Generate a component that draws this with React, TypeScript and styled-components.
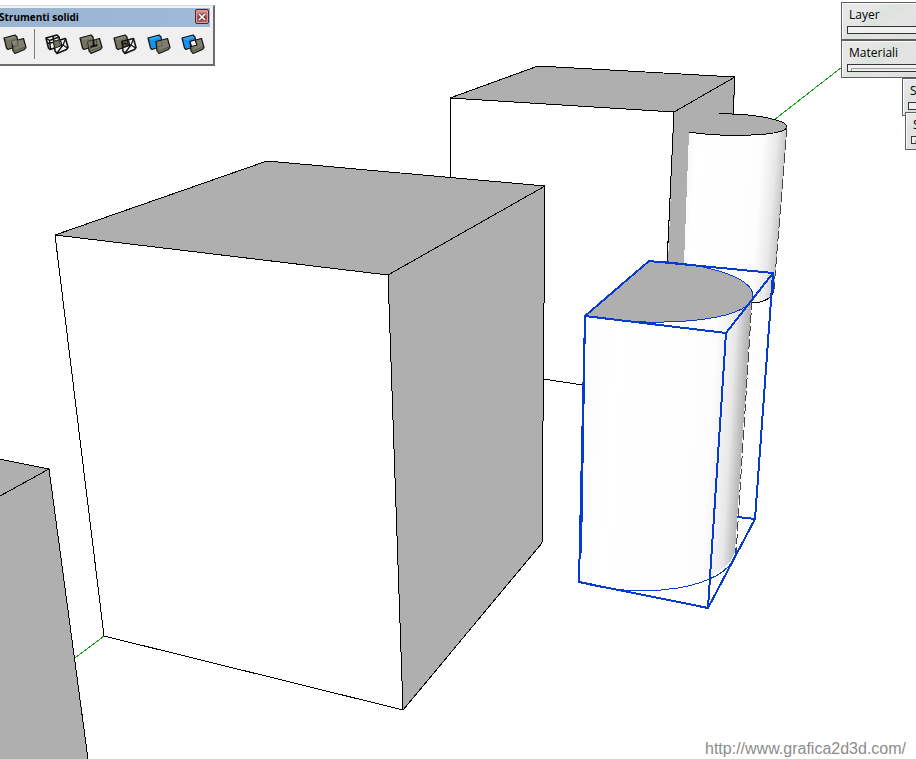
import React from "react";
import styled, { createGlobalStyle } from "styled-components";

const GlobalStyle = createGlobalStyle`
  * { box-sizing: border-box; }
  body {
    margin: 0;
    background: #fff;
    font-family: "Open Sans", "Noto Sans", sans-serif;
    font-size: 12px;
    color: #000;
  }
`;

const Workspace = styled.main`
  position: relative;
  width: 100%;
  height: 100vh;
  overflow: hidden;
  background: #fff;
`;

const Scene = styled.svg`
  display: block;
  width: 100%;
  height: 100%;
  shape-rendering: crispEdges;
`;

const ToolWindow = styled.section`
  position: absolute;
  top: 5px;
  left: -6px;
  padding: 2px 3px 3px;
  background: #f0f0f0;
  border: 1px solid #dcdcdc;
  border-right: 2px solid #6c6c6c;
  border-bottom: 2px solid #6c6c6c;
`;

const TitleBar = styled.header`
  display: flex;
  align-items: center;
  justify-content: space-between;
  height: 19px;
  padding: 0 1px 2px;
  background: linear-gradient(90deg, #99b4d1, #9fb9d8);
`;

const Title = styled.h1`
  margin: 0;
  font: bold 10px/18px "Open Sans", "Noto Sans", sans-serif;
  white-space: nowrap;
`;

const CloseButton = styled.button`
  display: grid;
  place-items: center;
  width: 14px;
  height: 15px;
  padding: 0;
  border: 1px solid #5b2020;
  border-radius: 2px;
  background: linear-gradient(#d99a98, #b95a58 48%, #a8403e 52%, #bd6462);
  box-shadow: inset 0 0 0 1px #d8a09e;
`;

const Tools = styled.div`
  display: flex;
  align-items: center;
  height: 34px;
`;

const ToolButton = styled.button`
  display: grid;
  place-items: center;
  width: 34px;
  height: 30px;
  padding: 0;
  border: 0;
  background: transparent;
`;

const Divider = styled.span`
  width: 1px;
  height: 30px;
  margin: 0 5px 0 2px;
  background: #7c7c7c;
`;

const TrayStack = styled.aside<{ $top: number; $width: number }>`
  position: absolute;
  top: ${(p) => p.$top}px;
  right: 0;
  width: ${(p) => p.$width}px;
`;

const Tray = styled.section`
  height: 38px;
  padding: 4px 0 0 4px;
  overflow: hidden;
  border: 1px solid #5f5f5f;
  border-right: 0;
  box-shadow: inset 1px 1px 0 #fafafa;
  background: linear-gradient(145deg, #e8e8e8 25%, #dce3dc 48%, #e4e4e4 65%, #dedede);
`;

const TrayTitle = styled.h2`
  margin: 0 0 3px 3px;
  font: 12px/16px "Open Sans", "Noto Sans", sans-serif;
`;

const TraySlot = styled.div<{ $inset?: boolean }>`
  height: 8px;
  margin-left: 1px;
  padding: 3px 0 0 3px;
  border: 1px solid #343434;
  border-right: 0;
  background: #f0f0f0;

  &::before {
    content: "";
    display: ${(p) => (p.$inset ? "block" : "none")};
    height: 2px;
    border-top: 1px solid #9c9c9c;
    border-left: 1px solid #9c9c9c;
  }
`;

const SiteLink = styled.a`
  position: absolute;
  right: 10px;
  bottom: 0;
  color: #8c8c8c;
  font: 16px/20px "Liberation Sans", Arial, sans-serif;
  text-decoration: none;
`;

type Kind = "union" | "intersect" | "outerShell" | "subtract" | "trim" | "split";

const OLIVE = "#74735f";
const OLIVE_TOP = "#88877a";
const BLUE = "#1592ed";

const BACK = "M1 4 12 1 14 3 15.5 12 5 15.5 3.5 14Z";
const FRONT = "M9 7.5 20.5 4.5 23 13.5 21.5 15.5 12 19.5 10 17Z";

function ToolIcon({ kind }: { kind: Kind }) {
  const blue = kind === "trim" || kind === "split";
  const wireBack = kind === "intersect";
  const wireFront = kind === "intersect" || kind === "subtract";
  return (
    <svg width="24" height="21" viewBox="0 0 24 21" strokeLinejoin="round" aria-hidden="true">
      <path d={BACK} fill={wireBack ? "#f7f7f7" : blue ? BLUE : OLIVE} stroke="#111" strokeWidth={wireBack ? 1.6 : 1.2} />
      {!wireBack && <path d="M2.5 4.6 11.8 2 13.3 3.6 4.5 6Z" fill={blue ? "#35a8f5" : OLIVE_TOP} />}
      {wireBack && <path d="M1 4 4.5 6.5 14 3M4.5 6.5 5.5 15M2.5 9.5 14.5 7M8 2 10 14" fill="none" stroke="#111" strokeWidth="1.5" />}
      <path d={FRONT} fill={wireFront ? "#f7f7f7" : OLIVE} stroke="#111" strokeWidth={wireFront ? 1.6 : 1.2} />
      {!wireFront && <path d="M10 8 20 5.4 22 12.8 12.5 16.2Z" fill={OLIVE_TOP} opacity=".6" />}
      {wireFront && <path d="M10.5 13.5 18 11 22.5 14M18 11 20.5 5M18 11 12 19M15.5 6.5 17 12" fill="none" stroke="#111" strokeWidth="1.3" />}
      {kind === "union" && (
        <>
          <path d="M8.5 6.5 14 5V9.5L9.5 10.5Z" fill={OLIVE_TOP} />
          <path d="M8 7 14 5.5 15 11.5 10 13M10 16 12.5 16.5 22 13" fill="none" stroke="#4c4c42" strokeWidth=".7" />
        </>
      )}
      {kind === "intersect" && <path d="M8.5 7.5 14 6 15.5 12 10 14Z" fill={OLIVE} stroke="#333328" />}
      {kind === "outerShell" && (
        <>
          <path d="M8.5 7.5 17 5.5 18.5 12 10 14Z" fill="#77766a" stroke="#3b3b30" strokeWidth=".8" />
          <path d="M14.5 6V11.5M11.5 12.8 18 11" fill="none" stroke="#080808" strokeWidth="1.7" />
          <path d="M10 16 12.5 16.5 22 13" fill="none" stroke="#4c4c42" strokeWidth=".7" />
        </>
      )}
      {kind === "subtract" && (
        <>
          <path d="M9 7.5 14.5 6 15.5 11.5 10 13.5Z" fill="#575649" stroke="#111" strokeWidth="1.2" />
          <path d="M10 9.5 14.5 10" fill="none" stroke="#080808" />
        </>
      )}
      {kind === "trim" && <path d="M10.5 12.5 15.5 11.5 14 7M10.5 15 12.5 16.5 22 13" fill="none" stroke="#515147" strokeWidth=".7" />}
      {kind === "split" && (
        <>
          <path d="M9 7.5 14 6 16 11 10.5 12.5Z" fill="#f7f7f7" stroke="#111" strokeWidth="1.2" />
          <path d="M10.5 15 12.5 16.5 22 13" fill="none" stroke="#515147" strokeWidth=".7" />
        </>
      )}
    </svg>
  );
}

const tools: { kind: Kind; label: string }[] = [
  { kind: "intersect", label: "Interseca" },
  { kind: "outerShell", label: "Unisci" },
  { kind: "subtract", label: "Sottrai" },
  { kind: "trim", label: "Ritaglia" },
  { kind: "split", label: "Dividi" },
];

function SolidsScene() {
  return (
    <Scene viewBox="0 0 916 759" preserveAspectRatio="xMinYMin slice" role="img" aria-label="Solidi 3D">
      <defs>
        <linearGradient id="rear" gradientUnits="userSpaceOnUse" x1="689" y1="132" x2="787" y2="140">
          <stop offset="0" stopColor="#f7f7f7" />
          <stop offset=".1" stopColor="#fff" />
          <stop offset=".76" stopColor="#fdfdfd" />
          <stop offset=".9" stopColor="#e8e8e8" />
          <stop offset="1" stopColor="#c4c4c4" />
        </linearGradient>
        <linearGradient id="curve" gradientUnits="userSpaceOnUse" x1="585" y1="450" x2="744" y2="459">
          <stop offset="0" stopColor="#fcfcfc" />
          <stop offset=".15" stopColor="#fff" />
          <stop offset=".78" stopColor="#fdfdfd" />
          <stop offset=".9" stopColor="#e8e8e8" />
          <stop offset="1" stopColor="#a8a8a8" />
        </linearGradient>
      </defs>
      <path d="M75 658 104 636M774 120 842 67" fill="none" stroke="#16a016" />
      <g stroke="#000" strokeLinejoin="round">
        <path d="M450 98 674 112 667 394 450 368Z" fill="#fff" stroke="none" />
        <path d="M450 180V98L674 112 667 265M543 379 583 385" fill="none" />
        <path d="M450 98 538 66 735 77 674 112Z" fill="#afafaf" />
        <path d="M674 112 735 77 730 290 667 290Z" fill="#afafaf" stroke="none" />
        <path d="M674 112 735 77 733 114M674 112 667 263" fill="none" />
      </g>
      <path d="M689 132 787 126 774 291Q771 302 752 303L683 290Z" fill="url(#rear)" />
      <path d="M719 114C752 113 787 120 787 127C784 137 719 137 689 132Z" fill="#afafaf" />
      <path d="M719 114C752 113 787 120 787 127C784 137 719 137 689 132" fill="none" stroke="#000" />
      <path d="M787 127 774 289" stroke="#444" strokeDasharray="10 3" />
      <path d="M774 289C774 297 764 303 752 303" fill="none" stroke="#000" />
      <g stroke="#000" strokeLinejoin="round">
        <path d="M55 235 388 275 403 710 104 636Z" fill="#fff" />
        <path d="M55 235 267 161 545 186 388 275Z" fill="#afafaf" />
        <path d="M388 275 545 186 542 543 403 710Z" fill="#afafaf" />
        <path d="M-6 458 49 469 88 759V770H-6Z" fill="#afafaf" />
        <path d="M0 496 49 469" />
      </g>
      <path d="M585 316C649 329 746 323 752 295L735 552C728 583 642 600 579 582Z" fill="url(#curve)" />
      <path d="M649 261C700 262 753 276 753 296C750 323 649 328 585 316Z" fill="#afafaf" />
      <path d="M752 300 736 554" fill="none" stroke="#444" strokeDasharray="10 3" />
      <g fill="none" stroke="#073bd0" strokeLinejoin="round">
        <path d="M649 261C700 262 753 276 753 296C750 323 649 328 585 316M579 582C642 601 727 588 735 555V548" />
        <path d="M585 316 649 261 773 273 726 333ZM585 316 579 582 708 608 726 333M773 273 755 519 708 608M755 519 737 517M585 316 581 553" strokeWidth="2" />
        <path d="M773 273 774 292" />
      </g>
    </Scene>
  );
}

export default function App() {
  return (
    <>
      <GlobalStyle />
      <Workspace>
        <SolidsScene />
        <ToolWindow>
          <TitleBar>
            <Title>Strumenti solidi</Title>
            <CloseButton aria-label="Chiudi">
              <svg width="8" height="8" viewBox="0 0 8 8" aria-hidden="true">
                <path d="M1 1 7 7M7 1 1 7" stroke="#4a3434" strokeWidth="3" />
                <path d="M1 1 7 7M7 1 1 7" stroke="#fff" strokeWidth="1.7" />
              </svg>
            </CloseButton>
          </TitleBar>
          <Tools>
            <ToolButton aria-label="Guscio esterno"><ToolIcon kind="union" /></ToolButton>
            <Divider />
            {tools.map((tool) => (
              <ToolButton key={tool.kind} aria-label={tool.label}><ToolIcon kind={tool.kind} /></ToolButton>
            ))}
          </Tools>
        </ToolWindow>
        <TrayStack $top={2} $width={75}>
          <Tray><TrayTitle>Layer</TrayTitle><TraySlot /></Tray>
          <Tray><TrayTitle>Materiali</TrayTitle><TraySlot $inset /></Tray>
        </TrayStack>
        <TrayStack $top={78} $width={14}>
          <Tray><TrayTitle>S</TrayTitle><TraySlot /></Tray>
        </TrayStack>
        <TrayStack $top={112} $width={11}>
          <Tray><TrayTitle>S</TrayTitle><TraySlot $inset /></Tray>
        </TrayStack>
        <SiteLink href="http://www.grafica2d3d.com/">http://www.grafica2d3d.com/</SiteLink>
      </Workspace>
    </>
  );
}
